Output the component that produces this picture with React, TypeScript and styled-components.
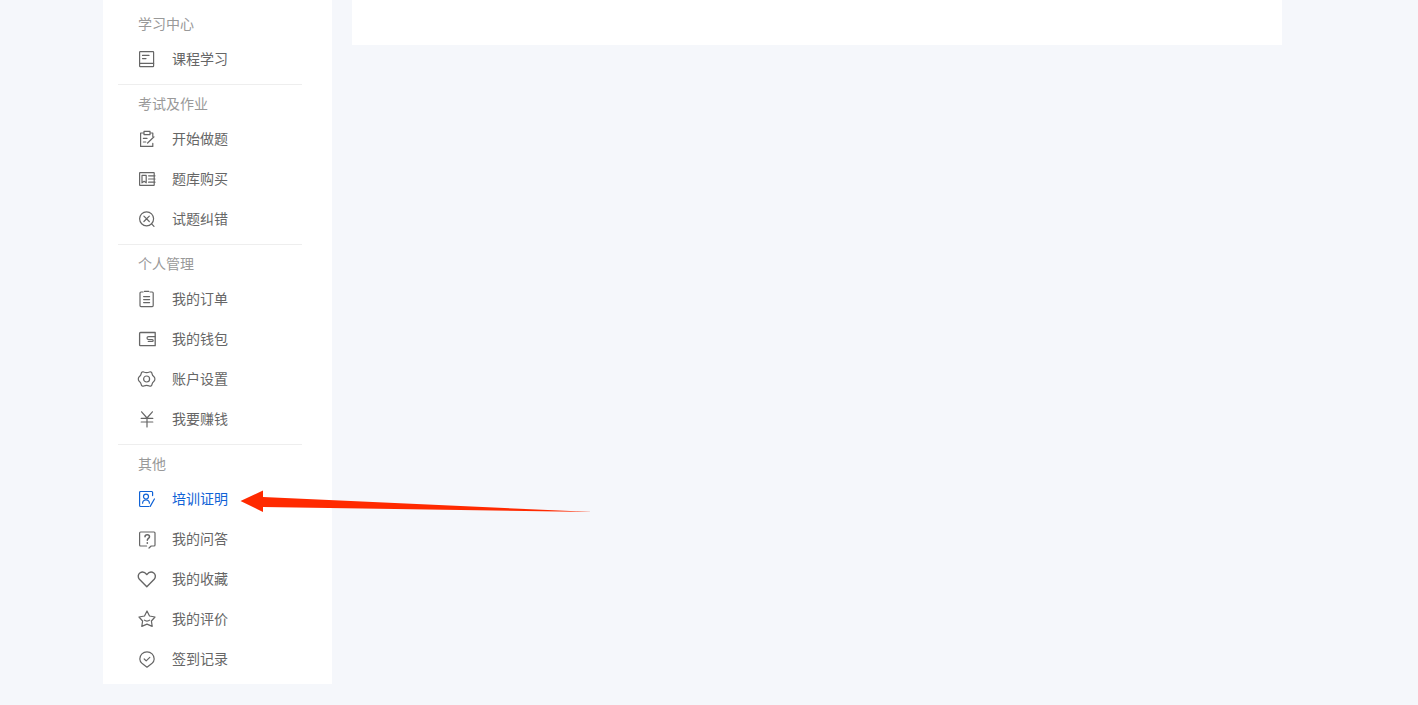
import { ReactNode } from 'react';
import styled, { createGlobalStyle } from 'styled-components';

const GlobalStyle = createGlobalStyle`
  html, body {
    margin: 0;
    padding: 0;
    background: #f5f7fb;
    font-family: "Noto Sans CJK SC", "Liberation Sans", sans-serif;
  }
`;

const Page = styled.div`
  position: relative;
  display: flex;
  align-items: flex-start;
  gap: 20px;
  min-height: 705px;
  padding-left: 103px;
  box-sizing: border-box;
`;

const Sidebar = styled.aside`
  width: 229px;
  padding-top: 5px;
  background: #fff;
`;

const Group = styled.section`
  margin: 0 30px 0 15px;
  padding-bottom: 5px;
  border-top: 1px solid #eeeeee;

  &:first-child {
    border-top: none;
  }
`;

const GroupTitle = styled.div`
  padding: 8px 0 6px 20px;
  font-size: 14px;
  line-height: 20px;
  color: #999;
`;

const Item = styled.a<{ $active?: boolean }>`
  display: flex;
  align-items: center;
  gap: 15px;
  height: 40px;
  padding-left: 19px;
  font-size: 14px;
  color: ${(p) => (p.$active ? '#0f62d6' : '#666')};
  cursor: pointer;
`;

const Label = styled.span`
  line-height: 20px;
  margin-bottom: 2px;
`;

const IconSvg = styled.svg`
  flex: none;
  width: 20px;
  height: 20px;
  fill: none;
  stroke: currentColor;
  stroke-width: 1.2;
  stroke-linecap: round;
  stroke-linejoin: round;
`;

const MainPanel = styled.main`
  width: 930px;
  height: 45px;
  background: #fff;
`;

const ArrowSvg = styled.svg`
  position: absolute;
  left: 235px;
  top: 485px;
  width: 360px;
  height: 32px;
`;

const Icon = ({ children }: { children: ReactNode }) => (
  <IconSvg viewBox="0 0 20 20">{children}</IconSvg>
);

const icons: Record<string, ReactNode> = {
  book: (
    <>
      <rect x="2.6" y="2.6" width="14" height="15" rx="0.6" />
      <path d="M2.6 14.4h14M5.500 6.400h6.500M5.500 9.600h3.500" />
    </>
  ),
  edit: (
    <>
      <path d="M7 4H3.600v13.400h12.200v-3M13 4h2.800v3.400M7 4V2.400h6V5.600H7z" />
      <path d="M6.400 9.400h3.600M6.400 13h2.400M10.600 14l6.400-6.200" />
    </>
  ),
  bank: (
    <>
      <rect x="2.600" y="3.600" width="14.600" height="12.800" rx="0.4" />
      <path d="M5 6.400h4.200v7.400l-2.100-1.500L5 13.800zM11.600 6.800h6.400M11.600 10h6.400M11.600 13.200h6.400" />
    </>
  ),
  wrong: (
    <>
      <circle cx="9.600" cy="9.800" r="7" />
      <path d="M6.900 7.100l5.400 5.400M12.300 7.100l-5.400 5.400M14.600 14.800l2.400 2.600" />
    </>
  ),
  order: (
    <>
      <path d="M6 3H4a1 1 0 0 0-1 1v12.600c0 .5.400 1 1 1h11.200c.6 0 1-.5 1-1V4a1 1 0 0 0-1-1h-2M7.400 2.400h4.400" />
      <path d="M6.600 7.600h6M6.600 10.600h6M6.600 13.600h6" />
    </>
  ),
  wallet: (
    <>
      <path d="M2.600 16V4.400c0-.6.400-.9.900-.9h14.700v13.200H3.300a.7.7 0 0 1-.7-.7z" strokeWidth="1.3" />
      <path d="M18 7.600h-6.400c-.9 0-1.600.7-1.600 1.500s.7 1.500 1.600 1.500h3.600c.6 0 1 .4 1 .9s-.4 1-1 1h-4" />
    </>
  ),
  gear: (
    <>
      <path d="M6.800 3C8.600 3.800 10.600 3.800 12.400 3C13.600 2.400 14.800 3.200 15 4.600C15.200 6 15.800 6.800 17 7.800C18.200 8.800 18.200 11.200 17 12.200C15.800 13.200 15.200 14 15 15.400C14.800 16.800 13.600 17.600 12.400 17C10.600 16.200 8.600 16.200 6.800 17C5.600 17.600 4.400 16.800 4.200 15.400C4 14 3.400 13.200 2.200 12.200C1 11.200 1 8.800 2.200 7.800C3.400 6.800 4 6 4.200 4.600C4.400 3.200 5.600 2.400 6.800 3z" />
      <circle cx="9.600" cy="10" r="3" />
    </>
  ),
  yen: <path d="M4.600 2.800L10 9l5.400-6.200M4.200 9.400h11.600M4.200 13h11.600M10 9v9" />,
  cert: (
    <>
      <path d="M15.600 6.600V3.400a.9.900 0 0 0-.9-.9H3.500a.9.900 0 0 0-.9.900v13.200c0 .5.400.9.900.9h8.500" />
      <circle cx="9" cy="7.600" r="2.500" />
      <path d="M5.600 14.200c0-1.900 1.500-3.200 3.400-3.200s3.400 1.300 3.400 3.200M13.200 17.400l4.200-7.400" />
    </>
  ),
  question: (
    <>
      <path d="M9.600 17H3.600a1 1 0 0 1-1-1V4a1 1 0 0 1 1-1h13.400a1 1 0 0 1 1 1v12a1 1 0 0 1-1 1h-2.800l-2.200 2" />
      <path d="M8 7.800c0-1.400 1-2.100 2.300-2.100s2.200.8 2.200 2c0 1.700-2.200 1.700-2.200 3.500" strokeWidth="1.500" />
      <path d="M10.300 13.800v.4" strokeWidth="1.600" />
    </>
  ),
  heart: (
    <path d="M9.800 17.800L2.400 10.300C.6 8.300 1 5.400 2.800 4c2.200-1.600 5-1 7 1.600C11.800 3 14.600 2.400 16.800 4c1.800 1.400 2.200 4.300.4 6.300z" strokeWidth="1.400" />
  ),
  star: (
    <>
      <path d="M10 2l2.500 5 5.500 1-3.600 4 .8 5.400-5.200-2.300-5.200 2.300.8-5.400L2 8l5.500-1z" />
      <path d="M7.400 11.200c1.300 1.300 3.900 1.300 5.200 0" />
    </>
  ),
  check: (
    <>
      <path d="M10 18.200l-4.800-3.600C3.600 13.200 2.800 11.800 2.800 10a7.200 7.200 0 0 1 14.400 0c0 1.800-.8 3.200-2.400 4.600z" />
      <path d="M7.200 10l2 1.900 3.600-3.500" />
    </>
  ),
};

const sections = [
  { title: '学习中心', items: [{ icon: 'book', label: '课程学习' }] },
  {
    title: '考试及作业',
    items: [
      { icon: 'edit', label: '开始做题' },
      { icon: 'bank', label: '题库购买' },
      { icon: 'wrong', label: '试题纠错' },
    ],
  },
  {
    title: '个人管理',
    items: [
      { icon: 'order', label: '我的订单' },
      { icon: 'wallet', label: '我的钱包' },
      { icon: 'gear', label: '账户设置' },
      { icon: 'yen', label: '我要赚钱' },
    ],
  },
  {
    title: '其他',
    items: [
      { icon: 'cert', label: '培训证明', active: true },
      { icon: 'question', label: '我的问答' },
      { icon: 'heart', label: '我的收藏' },
      { icon: 'star', label: '我的评价' },
      { icon: 'check', label: '签到记录' },
    ],
  },
];

export default function App() {
  return (
    <>
      <GlobalStyle />
      <Page>
        <Sidebar>
          {sections.map((section) => (
            <Group key={section.title}>
              <GroupTitle>{section.title}</GroupTitle>
              {section.items.map((item) => (
                <Item key={item.label} $active={'active' in item && item.active}>
                  <Icon>{icons[item.icon]}</Icon>
                  <Label>{item.label}</Label>
                </Item>
              ))}
            </Group>
          ))}
        </Sidebar>
        <MainPanel />
        {/* annotation arrow drawn over the page */}
        <ArrowSvg viewBox="0 0 360 32">
          <path d="M5.500 16L28 5.500V12L358 27L28 22V27z" fill="#ff2a00" />
        </ArrowSvg>
      </Page>
    </>
  );
}
